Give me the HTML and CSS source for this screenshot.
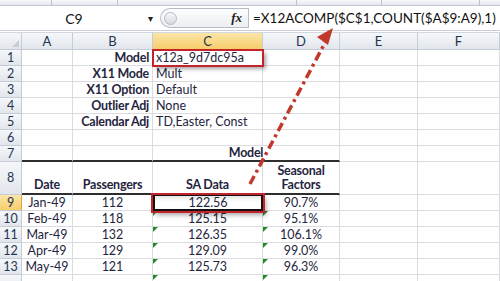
FILE: index.html
```html
<!DOCTYPE html>
<html lang="en">
<head>
    <meta charset="UTF-8">
    <title>X12ACOMP</title>
    <link rel="stylesheet" href="styles.css">
</head>
<body>
    <div class="ribbon">
        <span style="width: 52px"></span>
        <span style="width: 66px"></span>
        <span style="width: 179px"></span>
        <span style="width: 85px"></span>
        <span style="width: 98px"></span>
    </div>

    <div class="formula-bar">
        <div class="name-box">C9</div>
        <div class="name-drop">&#9662;</div>
        <div class="fx-pill">
            <span class="fx-knob"></span>
            <span class="fx">fx</span>
        </div>
        <div class="formula">=X12ACOMP($C$1,COUNT($A$9:A9),1)</div>
    </div>

    <div class="sheet">
        <div class="row hdr">
            <div class="corner"></div>
            <div class="ch">A</div>
            <div class="ch">B</div>
            <div class="ch sel">C</div>
            <div class="ch">D</div>
            <div class="ch">E</div>
            <div class="ch">F</div>
        </div>

        <div class="row">
            <div class="rh">1</div>
            <div class="c"></div>
            <div class="c right bold">Model</div>
            <div class="c callout">x12a_9d7dc95a</div>
            <div class="c"></div><div class="c"></div><div class="c"></div>
        </div>
        <div class="row">
            <div class="rh">2</div>
            <div class="c"></div>
            <div class="c right bold">X11 Mode</div>
            <div class="c">Mult</div>
            <div class="c"></div><div class="c"></div><div class="c"></div>
        </div>
        <div class="row">
            <div class="rh">3</div>
            <div class="c"></div>
            <div class="c right bold">X11 Option</div>
            <div class="c">Default</div>
            <div class="c"></div><div class="c"></div><div class="c"></div>
        </div>
        <div class="row">
            <div class="rh">4</div>
            <div class="c"></div>
            <div class="c right bold">Outlier Adj</div>
            <div class="c">None</div>
            <div class="c"></div><div class="c"></div><div class="c"></div>
        </div>
        <div class="row">
            <div class="rh">5</div>
            <div class="c"></div>
            <div class="c right bold">Calendar Adj</div>
            <div class="c">TD,Easter, Const</div>
            <div class="c"></div><div class="c"></div><div class="c"></div>
        </div>
        <div class="row">
            <div class="rh">6</div>
            <div class="c"></div><div class="c"></div><div class="c"></div>
            <div class="c"></div><div class="c"></div><div class="c"></div>
        </div>
        <div class="row">
            <div class="rh">7</div>
            <div class="c thick"></div>
            <div class="c thick"></div>
            <div class="c thick center bold span2">Model</div>
            <div class="c"></div><div class="c"></div>
        </div>
        <div class="row tall">
            <div class="rh">8</div>
            <div class="c thick center bold">Date</div>
            <div class="c thick center bold">Passengers</div>
            <div class="c thick center bold">SA Data</div>
            <div class="c thick center bold">Seasonal<br>Factors</div>
            <div class="c"></div><div class="c"></div>
        </div>
        <div class="row">
            <div class="rh sel">9</div>
            <div class="c center">Jan-49</div>
            <div class="c center">112</div>
            <div class="c center active">122.56</div>
            <div class="c center">90.7%</div>
            <div class="c"></div><div class="c"></div>
        </div>
        <div class="row">
            <div class="rh">10</div>
            <div class="c center">Feb-49</div>
            <div class="c center">118</div>
            <div class="c center flag">125.15</div>
            <div class="c center flag">95.1%</div>
            <div class="c"></div><div class="c"></div>
        </div>
        <div class="row">
            <div class="rh">11</div>
            <div class="c center">Mar-49</div>
            <div class="c center">132</div>
            <div class="c center flag">126.35</div>
            <div class="c center flag">106.1%</div>
            <div class="c"></div><div class="c"></div>
        </div>
        <div class="row">
            <div class="rh">12</div>
            <div class="c center">Apr-49</div>
            <div class="c center">129</div>
            <div class="c center flag">129.09</div>
            <div class="c center flag">99.0%</div>
            <div class="c"></div><div class="c"></div>
        </div>
        <div class="row">
            <div class="rh">13</div>
            <div class="c center">May-49</div>
            <div class="c center">121</div>
            <div class="c center flag">125.73</div>
            <div class="c center flag">96.3%</div>
            <div class="c"></div><div class="c"></div>
        </div>
        <div class="row">
            <div class="rh"></div>
            <div class="c"></div>
            <div class="c"></div>
            <div class="c flag"></div>
            <div class="c flag"></div>
            <div class="c"></div><div class="c"></div>
        </div>
    </div>

    <!-- dash-dot callout arrow from C9 up to the formula -->
    <svg class="arrow" width="500" height="281" viewBox="0 0 500 281">
        <line x1="250" y1="184" x2="327" y2="39" stroke="#c0392b" stroke-width="3.5" stroke-dasharray="9 4 3 4"></line>
        <polygon points="333,28 317,37 328,45" fill="#c0392b"></polygon>
    </svg>
</body>
</html>
```

FILE: styles.css
```css
* {
    margin: 0;
    padding: 0;
    box-sizing: border-box;
}

body {
    width: 500px;
    height: 281px;
    overflow: hidden;
    position: relative;
    background: #fff;
    font-family: 'Lato', 'Liberation Sans', sans-serif;
    color: #1f2540;
}

.ribbon {
    height: 6px;
    display: flex;
    background: linear-gradient(#f6f8fa, #e3e8ee);
    border-bottom: 1px solid #c3cad4;
}

.ribbon span {
    height: 100%;
    border-right: 1px solid #b9c1cc;
}

.formula-bar {
    height: 25px;
    display: flex;
    align-items: center;
    background: #fff;
    border-bottom: 1px solid #c7ced8;
}

.name-box {
    width: 148px;
    text-align: center;
    font-size: 14px;
    color: #111;
}

.name-drop {
    width: 12px;
    font-size: 10px;
    color: #222;
}

.fx-pill {
    width: 88px;
    height: 20px;
    display: flex;
    align-items: center;
    justify-content: space-between;
    padding: 0 6px 0 3px;
    border: 1px solid #b4bcc8;
    border-right: none;
    border-radius: 10px 0 0 10px;
    background: linear-gradient(#fbfcfd, #eceff3);
}

.fx-knob {
    width: 13px;
    height: 13px;
    border-radius: 50%;
    border: 1px solid #b3bac4;
    background: linear-gradient(#f6f7f8, #d6dae0);
}

.fx {
    font-family: 'Liberation Serif', serif;
    font-style: italic;
    font-weight: bold;
    font-size: 13px;
    color: #222;
}

.formula {
    flex: 1;
    height: 20px;
    line-height: 20px;
    padding-left: 4px;
    border-left: 1px solid #b4bcc8;
    font-size: 13.5px;
    color: #111;
    white-space: nowrap;
}

.sheet {
    margin-top: 1px;
    border-top: 1px solid #d2d8e0;
}

.row {
    display: grid;
    grid-template-columns: 22px 51px 80px 110px 77px 78px 82px;
    height: 16px;
}

.row.hdr {
    height: 17px;
}

.row.tall {
    height: 33px;
}

.corner,
.ch,
.rh {
    background: linear-gradient(#f5f7fa, #e2e6ec);
    border-right: 1px solid #c5ccd6;
    border-bottom: 1px solid #c5ccd6;
    color: #1f3550;
    font-size: 13px;
    line-height: 14px;
    display: flex;
    align-items: center;
    justify-content: center;
}

.corner {
    position: relative;
}

.corner::after {
    content: '';
    position: absolute;
    right: 2px;
    bottom: 2px;
    border-left: 7px solid transparent;
    border-bottom: 7px solid #c9ced6;
}

.rh {
    font-size: 12.5px;
}

.ch.sel,
.rh.sel {
    background: linear-gradient(#fbe6a8, #f6cd6a);
    border-bottom-color: #e3a33a;
}

.rh.sel {
    border-right: 1px solid #e3a33a;
    border-bottom-color: #c5ccd6;
}

.c {
    border-right: 1px solid #dadcdf;
    border-bottom: 1px solid #dadcdf;
    padding: 0 3px;
    font-size: 12.5px;
    line-height: 14px;
    display: flex;
    align-items: center;
    white-space: nowrap;
    position: relative;
}

.tall .c {
    align-items: flex-end;
    padding-bottom: 1px;
}

.right {
    justify-content: flex-end;
}

.center {
    justify-content: center;
    text-align: center;
}

.bold {
    font-weight: bold;
    font-size: 12.5px;
    letter-spacing: -0.25px;
}

.span2 {
    grid-column: span 2;
}

.thick {
    border-bottom: 2px solid #2e2e2e;
}

.callout {
    outline: 2px solid #c5232b;
    outline-offset: -1px;
    box-shadow: 3px 3px 4px rgba(0, 0, 0, 0.35);
    z-index: 1;
}

.active {
    border: 2px solid #111;
    border-top-width: 1px;
    line-height: 12px;
    outline: 2px solid #c5232b;
    outline-offset: 0;
    box-shadow: 3px 4px 5px rgba(0, 0, 0, 0.35);
    background: linear-gradient(#e6e6e6, #fff 45%);
    z-index: 1;
}

.flag::before {
    content: '';
    position: absolute;
    left: 0;
    top: 0;
    border-top: 5px solid #1e8a2e;
    border-right: 5px solid transparent;
}

.arrow {
    position: absolute;
    left: 0;
    top: 0;
    pointer-events: none;
    z-index: 2;
}
```
